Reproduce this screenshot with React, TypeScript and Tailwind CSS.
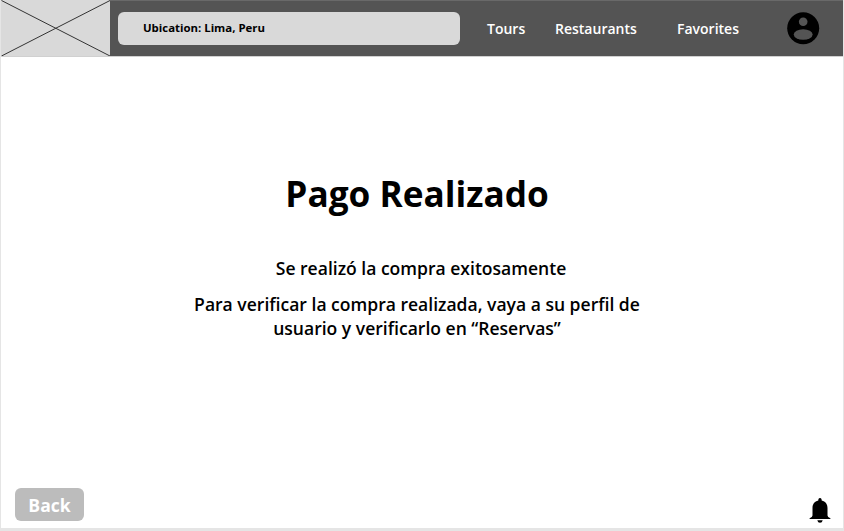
export default function App() {
  return (
    <div className="flex h-[531px] w-[844px] flex-col border-x border-b-[3px] border-[#e5e5e5] bg-white font-['Open_Sans',sans-serif] text-black">
      <header className="flex h-[57px] shrink-0 items-center border-t border-b border-t-[#696969] border-b-[#d0d0d0] bg-[#545454] text-sm font-semibold text-white">
        <svg className="-mt-px h-[56px] w-[109px] shrink-0 bg-[#d9d9d9]" viewBox="0 0 109 56" preserveAspectRatio="none">
          <path d="M0.500 0.500L109 56M0.500 56L109 0.500" stroke="#333" strokeWidth="1" fill="none" />
        </svg>
        <div className="ml-2 flex h-[33px] w-[342px] shrink-0 items-center rounded-md bg-[#d9d9d9] pl-[25px] text-[11.400px] font-bold text-black">
          Ubication: Lima, Peru
        </div>
        <nav className="flex whitespace-nowrap">
          <a className="ml-[27px] w-[68px]">Tours</a>
          <a className="w-[122px]">Restaurants</a>
          <a className="w-[107px]">Favorites</a>
        </nav>
        <svg className="size-[38.400px] shrink-0" viewBox="0 0 24 24">
          <circle cx="12" cy="12" r="10" fill="#000" />
          <circle cx="12" cy="8" r="2.700" fill="#545454" />
          <ellipse cx="12" cy="15.900" rx="5.900" ry="3.300" fill="#545454" />
        </svg>
      </header>
      <main className="flex flex-1 flex-col items-center pt-[112px] pr-[10px] text-center">
        <h1 className="text-[35.200px] leading-[49px] font-bold">Pago Realizado</h1>
        <p className="mt-[38px] ml-2 text-[17.550px] leading-6 font-semibold">Se realizó la compra exitosamente</p>
        <p className="mt-3 w-[470px] text-[17.550px] leading-6 font-semibold">Para verificar la compra realizada, vaya a su perfil de usuario y verificarlo en “Reservas”</p>
      </main>
      <footer className="flex items-end justify-between pr-[7px] pb-[7px] pl-[14px]">
        <button className="h-[33px] w-[69px] rounded-md bg-[#bcbcbc] pt-0.5 text-[17.550px] font-bold text-white">Back</button>
        <svg className="-mb-[6px] size-8" viewBox="0 0 32 32">
          <path d="M16 3C14.700 3 14.300 4 14.300 5.500C10.500 6.300 8.500 9.200 8.500 13V20.500Q8.500 22 5.600 23.200V24H26.400V23.200Q23.500 22 23.500 20.500V13C23.500 9.200 21.500 6.300 17.700 5.500C17.700 4 17.300 3 16 3ZM13.300 25.200H18.700Q18.200 27.800 16 27.800Q13.800 27.800 13.300 25.200Z" />
        </svg>
      </footer>
    </div>
  )
}
